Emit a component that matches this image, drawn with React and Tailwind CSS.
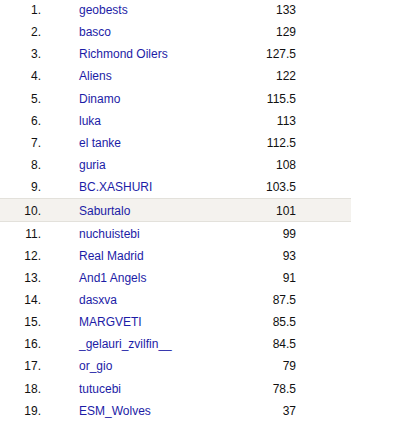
import React from 'react';

const rows = [
  ['geobests', '133'],
  ['basco', '129'],
  ['Richmond Oilers', '127.5'],
  ['Aliens', '122'],
  ['Dinamo', '115.5'],
  ['luka', '113'],
  ['el tanke', '112.5'],
  ['guria', '108'],
  ['BC.XASHURI', '103.5'],
  ['Saburtalo', '101'],
  ['nuchuistebi', '99'],
  ['Real Madrid', '93'],
  ['And1 Angels', '91'],
  ['dasxva', '87.5'],
  ['MARGVETI', '85.5'],
  ['_gelauri_zvilfin__', '84.5'],
  ['or_gio', '79'],
  ['tutucebi', '78.5'],
  ['ESM_Wolves', '37'],
];

const App = () => {
  return (
    <div className="w-[400px] h-[421px] bg-white overflow-hidden font-['Liberation_Sans',Arial,sans-serif] text-[12px]">
      <div className="w-[351px] -mt-px">
        {rows.map(([name, score], i) => {
          const active = i === 9;
          return (
            <div
              key={name}
              className={
                active
                  ? 'flex items-center h-[24.2px] pt-px bg-[#f4f2ee] border-y border-[#e3e1db]'
                  : 'flex items-center h-[22.15px]'
              }
            >
              <span className="w-[41px] text-right text-[#111]">{i + 1}.</span>
              <span className="ml-[38px] w-[150px] text-[#1c1ca6]">{name}</span>
              <span className="w-[67px] text-right text-[#111]">{score}</span>
            </div>
          );
        })}
      </div>
    </div>
  );
};

export default App;
